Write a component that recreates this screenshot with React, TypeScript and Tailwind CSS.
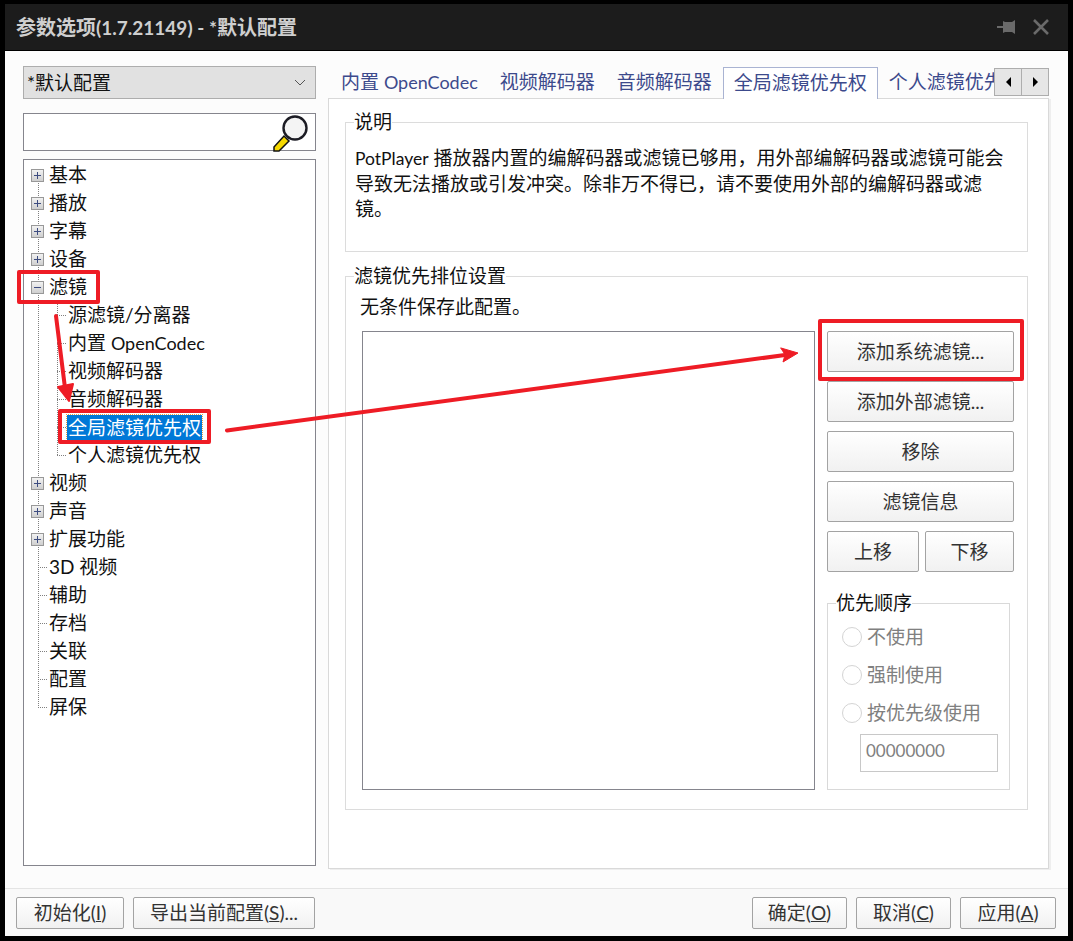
import type { ReactNode } from "react";

const font = "font-['Lato','Noto_Sans_CJK_SC',sans-serif]";

function ExpandBox({ open }: { open?: boolean }) {
  return (
    <span className="relative z-10 block w-[13px] h-[13px] shrink-0 border border-[#989898] bg-gradient-to-b from-[#f2f2f2] to-[#cfcfcf]">
      <span className="absolute left-[2px] top-[5px] w-[7px] h-px bg-[#3d4c80]" />
      {!open && <span className="absolute left-[5px] top-[2px] w-px h-[7px] bg-[#3d4c80]" />}
    </span>
  );
}

function TreeRow({ label, box, open }: { label: ReactNode; box?: boolean; open?: boolean }) {
  return (
    <div className="flex items-center h-7">
      {box ? (
        <div className="ml-[7px] mr-[5px] flex">
          <ExpandBox open={open} />
        </div>
      ) : (
        <span className="ml-[14px] mr-[2px] w-[9px] border-t border-dotted border-[#808080]" />
      )}
      <span>{label}</span>
    </div>
  );
}

function ChildRow({ label, selected }: { label: ReactNode; selected?: boolean }) {
  return (
    <div className="flex items-center h-7">
      <span className="ml-[33px] mr-[2px] w-[9px] border-t border-dotted border-[#808080]" />
      {selected ? (
        <span className="-ml-px pl-px pr-px h-[25px] leading-[25px] bg-[#0078d7] text-white outline-1 outline-dotted outline-[#e8a040]">
          {label}
        </span>
      ) : (
        <span>{label}</span>
      )}
    </div>
  );
}

function Tree() {
  return (
    <div className="relative h-[707px] border border-[#85858d] bg-white pt-px text-[#111] overflow-hidden">
      <span className="absolute left-[14px] top-[16px] h-[532px] border-l border-dotted border-[#808080]" />
      <span className="absolute left-[33px] top-[140px] h-[155px] border-l border-dotted border-[#808080]" />
      <TreeRow label="基本" box />
      <TreeRow label="播放" box />
      <TreeRow label="字幕" box />
      <TreeRow label="设备" box />
      <TreeRow label="滤镜" box open />
      <ChildRow label="源滤镜/分离器" />
      <ChildRow label={<>内置 <span className="text-[18px]">OpenCodec</span></>} />
      <ChildRow label="视频解码器" />
      <ChildRow label="音频解码器" />
      <ChildRow label="全局滤镜优先权" selected />
      <ChildRow label="个人滤镜优先权" />
      <TreeRow label="视频" box />
      <TreeRow label="声音" box />
      <TreeRow label="扩展功能" box />
      <TreeRow label="3D 视频" />
      <TreeRow label="辅助" />
      <TreeRow label="存档" />
      <TreeRow label="关联" />
      <TreeRow label="配置" />
      <TreeRow label="屏保" />
    </div>
  );
}

function Btn({ children, className }: { children: ReactNode; className: string }) {
  return (
    <button
      className={`flex items-center justify-center border border-[#a3a3a3] rounded-[2px] bg-gradient-to-b from-white to-[#f1f1f1] text-[#333] ${className}`}
    >
      {children}
    </button>
  );
}

function Radio({ label }: { label: string }) {
  return (
    <div className="flex items-center h-[38px] text-[#808080]">
      <span className="ml-[6px] w-5 h-5 rounded-full border border-[#d4d4d4] bg-white mr-[5px]" />
      <span>{label}</span>
    </div>
  );
}

function Tab({ label, active }: { label: ReactNode; active?: boolean }) {
  return active ? (
    <div className="shrink-0 h-8 px-[10px] border border-b-0 border-[#a9b3d2] bg-white text-[#3c4a8c] leading-[30px] relative z-10">
      {label}
    </div>
  ) : (
    <div className="shrink-0 h-8 px-[11px] text-[#3c4a8c] leading-[30px]">{label}</div>
  );
}

function Magnifier() {
  return (
    <svg width="44" height="38" viewBox="0 0 44 38" className="absolute right-0 top-0">
      <path d="M3 33 L13 22 L18 27 L8 37 L3 37 Z" fill="#f5d800" stroke="#111" strokeWidth="1.5" />
      <circle cx="24" cy="14" r="11.5" fill="#f4f4f4" stroke="#1c1c24" strokeWidth="2.4" />
    </svg>
  );
}

function PinIcon() {
  return (
    <svg width="18" height="16" viewBox="0 0 18 16" fill="#6a6a6a">
      <path d="M0 7h6V2l2 1h7l3-2v14l-3-2H8l-2 1V9H0z" />
    </svg>
  );
}

function CloseIcon() {
  return (
    <svg width="16" height="16" viewBox="0 0 16 16" stroke="#6a6a6a" strokeWidth="2.6" fill="none">
      <path d="M1 1l14 14M15 1L1 15" />
    </svg>
  );
}

function Annotations() {
  return (
    <svg className="absolute inset-0 w-full h-full pointer-events-none" viewBox="0 0 1073 941">
      <g fill="none" stroke="#ee1c25" strokeWidth="4" strokeLinejoin="round">
        <rect x="19" y="272" width="79" height="30" />
        <rect x="60" y="411" width="149" height="31" />
        <rect x="820" y="321" width="202" height="58" />
      </g>
      <g fill="#ee1c25" stroke="#ee1c25" strokeLinecap="round" strokeLinejoin="round">
        <path d="M56 316 L65 388" fill="none" strokeWidth="4" />
        <path d="M58 387 L73 384 L69 401 Z" strokeWidth="2" />
        <path d="M227 430.5 L785 355" fill="none" strokeWidth="4" />
        <path d="M781 348 L798 353 L783 362 L785 355 Z" strokeWidth="1" />
      </g>
    </svg>
  );
}

export default function App() {
  return (
    <div className={`relative w-[1073px] h-[941px] bg-black pt-1 px-[5px] pb-[5px] overflow-hidden text-[19px] leading-7 ${font}`}>
      {/* title bar */}
      <div className="flex items-center h-[46px] bg-[#1c1c1c] pl-[11px] text-[#cfcfcf] font-bold text-[20px]">
        <span className="grow">
          参数选项<span className="text-[19px]">(1.7.21149) - *</span>默认配置
        </span>
        <div className="flex items-center gap-[18px] pr-[19px]">
          <PinIcon />
          <CloseIcon />
        </div>
      </div>

      {/* main */}
      <div className="mt-px h-[837px] bg-[#fcfcfc] flex items-start pl-[18px] pr-[19px] pt-[15px] gap-3">
        <div className="w-[293px] shrink-0 flex flex-col">
          <div className="flex items-center justify-between h-[33px] border border-[#adadad] bg-[#e1e1e1] pl-[3px] pr-[9px] text-[#111]">
            <span>*默认配置</span>
            <svg width="12" height="7" viewBox="0 0 12 7" fill="none" stroke="#555" strokeWidth="1">
              <path d="M1 1l5 5 5-5" />
            </svg>
          </div>
          <div className="relative mt-[14px] mb-2 h-[38px] border border-[#85858d] bg-white">
            <Magnifier />
          </div>
          <Tree />
        </div>

        <div className="w-[721px] shrink-0 pt-px">
          {/* tab strip */}
          <div className="flex items-start h-[31px] pl-[2px]">
            <div className="flex w-[665px] overflow-hidden h-8">
              <Tab label={<>内置 <span className="text-[18px]">OpenCodec</span></>} />
              <Tab label="视频解码器" />
              <Tab label="音频解码器" />
              <Tab label="全局滤镜优先权" active />
              <Tab label="个人滤镜优先权" />
            </div>
            <div className="flex h-[28px] mt-px">
              <button className="w-[28px] border border-[#adadad] bg-[#e6e6e6] flex items-center justify-center">
                <span className="border-y-[5px] border-y-transparent border-r-[5px] border-r-black" />
              </button>
              <button className="w-[28px] -ml-px border border-[#adadad] bg-[#e6e6e6] flex items-center justify-center">
                <span className="border-y-[5px] border-y-transparent border-l-[5px] border-l-black" />
              </button>
            </div>
          </div>

          {/* tab page */}
          <div className="h-[771px] border border-[#d9d9d9] bg-white shadow-[2px_1px_0_#eeeeee] pl-4 pr-5 pt-[11px] text-[#111]">
            <fieldset className="h-[142px] border border-[#dcdcdc] px-2">
              <legend className="h-6 leading-6">说明</legend>
              <p className="mt-[11px] ml-px leading-[25px]">
                <span className="text-[17.5px]">PotPlayer</span> 播放器内置的编解码器或滤镜已够用，用外部编解码器或滤镜可能会
                <br />
                导致无法播放或引发冲突。除非万不得已，请不要使用外部的编解码器或滤
                <br />
                镜。
              </p>
            </fieldset>

            <fieldset className="mt-[12px] h-[546px] border border-[#dcdcdc] px-2">
              <legend className="h-6 leading-6">滤镜优先排位设置</legend>
              <div className="pl-[6px] mt-[5px] h-7">无条件保存此配置。</div>
              <div className="flex mt-[10px] ml-2 gap-3">
                <div className="w-[453px] h-[459px] border border-[#85858d] bg-white" />
                <div className="w-[187px]">
                  <div className="flex flex-col gap-[9px]">
                    <Btn className="h-[41px]">添加系统滤镜...</Btn>
                    <Btn className="h-[41px]">添加外部滤镜...</Btn>
                    <Btn className="h-[41px]">移除</Btn>
                    <Btn className="h-[41px]">滤镜信息</Btn>
                    <div className="flex gap-[6px]">
                      <Btn className="h-[41px] w-[92px]">上移</Btn>
                      <Btn className="h-[41px] w-[89px]">下移</Btn>
                    </div>
                  </div>
                  <fieldset className="mt-[19px] w-[183px] h-[199px] border border-[#d9d9d9] px-[8px]">
                    <legend className="h-6 leading-6">优先顺序</legend>
                    <div className="mt-[3px] -mb-px">
                      <Radio label="不使用" />
                      <Radio label="强制使用" />
                      <Radio label="按优先级使用" />
                    </div>
                    <div className="ml-[24px] mt-[3px] w-[138px] h-[38px] border border-[#c8c8c8] pl-[5px] text-[17px] leading-[32px] text-[#808080]">
                      00000000
                    </div>
                  </fieldset>
                </div>
              </div>
            </fieldset>
          </div>
        </div>
      </div>

      {/* footer */}
      <div className="h-[48px] border-t border-[#e4e4e4] bg-[#f9f9f9] flex items-center pl-[11px] pr-[12px]">
        <Btn className="w-[108px] h-8">初始化(<u>I</u>)</Btn>
        <Btn className="ml-[9px] w-[182px] h-8">导出当前配置(<u>S</u>)...</Btn>
        <div className="grow" />
        <Btn className="w-[95px] h-8">确定(<u>O</u>)</Btn>
        <Btn className="ml-[9px] w-[95px] h-8">取消(<u>C</u>)</Btn>
        <Btn className="ml-[9px] w-[96px] h-8">应用(<u>A</u>)</Btn>
      </div>

      <Annotations />
    </div>
  );
}
